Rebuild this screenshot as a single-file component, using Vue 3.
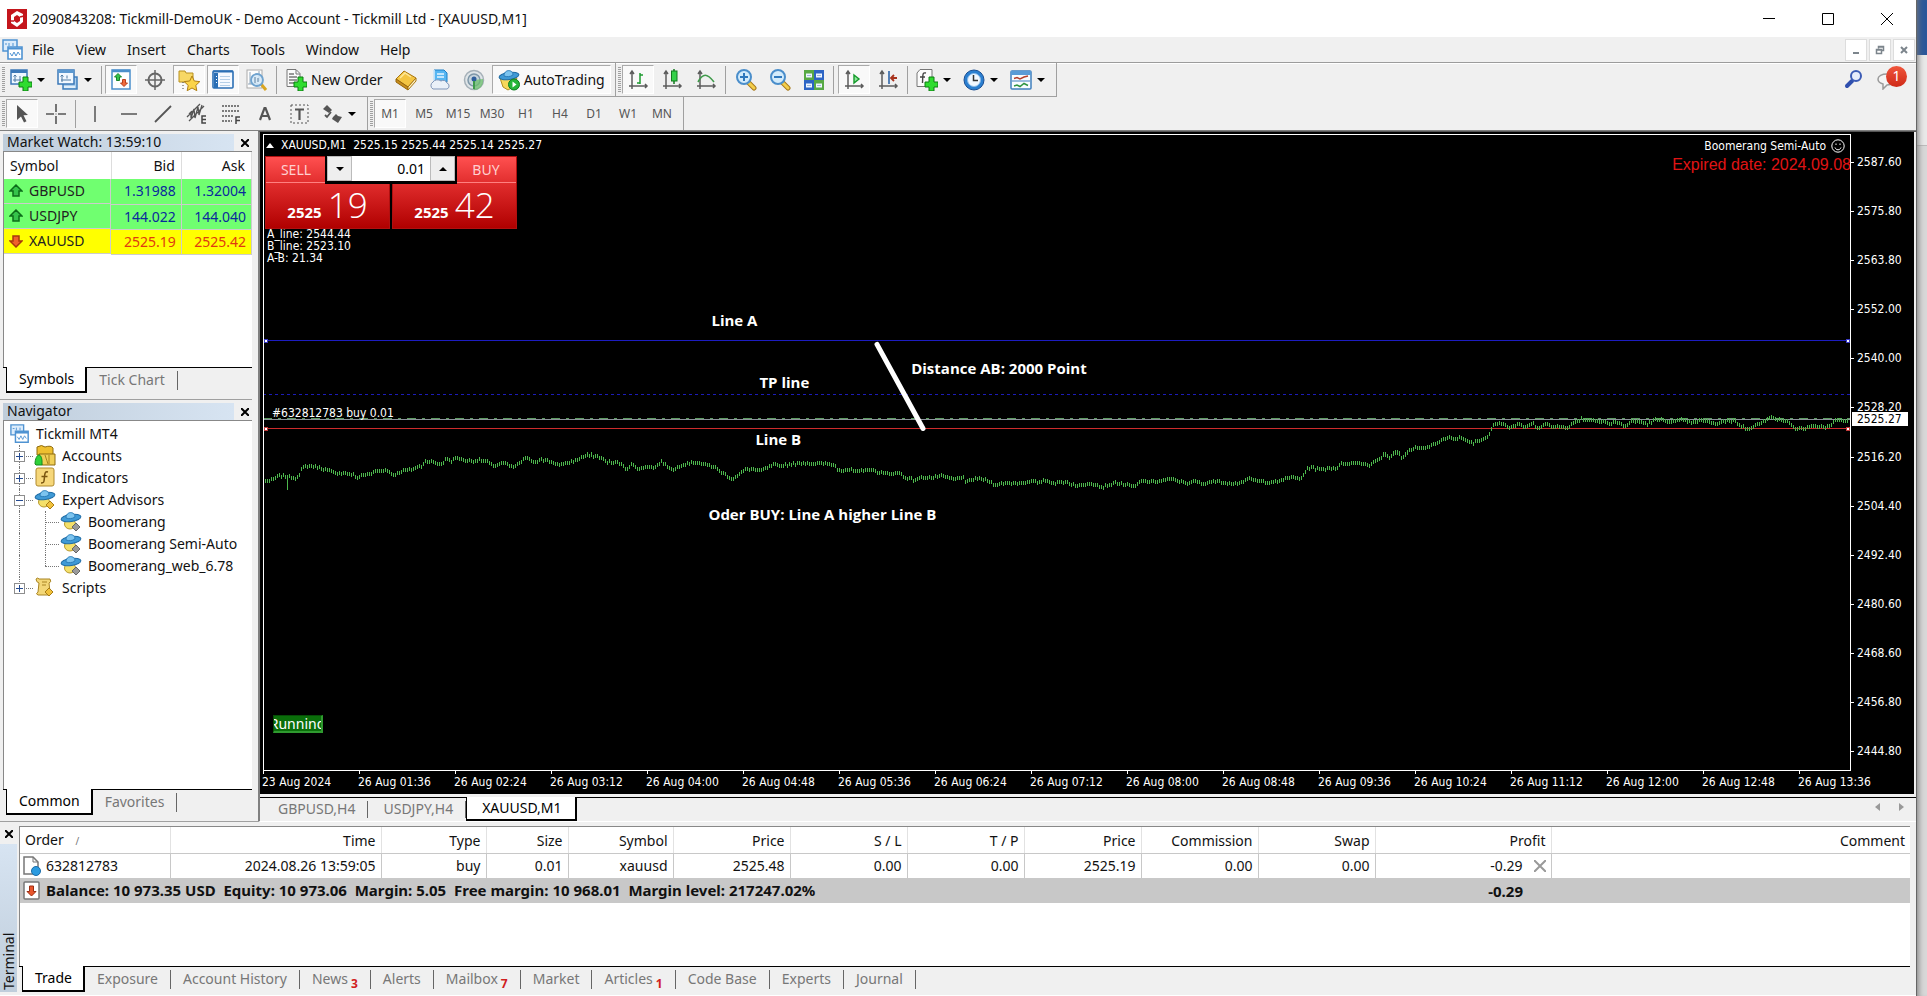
<script setup>
import { ref } from 'vue'

const menus = ['File', 'View', 'Insert', 'Charts', 'Tools', 'Window', 'Help']
const frames = ['M1', 'M5', 'M15', 'M30', 'H1', 'H4', 'D1', 'W1', 'MN']

const axes = '<path d="M5 3V20M2 17H20M3 5L5 2L7 5M18 15L20 17L18 19" fill="none" stroke="#5c5c5c" stroke-width="1.5"/>'
const plus = '<path d="M13 8h5v5h4v5h-4v4h-5v-4H9v-5h4z" fill="#2fdc2f" stroke="#0c7d12"/>'
const lens = '<path d="M14 14l5 5" stroke="#a8791a" stroke-width="5" stroke-linecap="round"/><path d="M14 14l5 5" stroke="#f3ce4b" stroke-width="3" stroke-linecap="round"/><circle cx="9" cy="8" r="7" fill="#d3ebfb" stroke="#4a8ecb" stroke-width="2"/>'
const hat = '<ellipse cx="10" cy="13" rx="5.500" ry="5" fill="#f4e06a" stroke="#b89a2c"/><ellipse cx="11" cy="7" rx="10" ry="3.600" transform="rotate(-8 11 7)" fill="#3f9ad6" stroke="#1f6ca6"/><path d="M6 7C6 0 15 0 15 6C12 8 9 8 6 7z" fill="#7cc4ef" stroke="#2b7db8"/>'

const icons = {
  newChart: '<rect x="1" y="1" width="16" height="14" fill="#eef7ff" stroke="#3b78b8" stroke-width="1.500"/><path d="M1 2.500h16" stroke="#3b78b8" stroke-width="3"/><path d="M5 6v7M3 11h8M10 7v5M3.500 7.500L5 6l1.500 1.500" stroke="#4f7aa3" fill="none"/>' + plus,
  profiles: '<path d="M6 8h14v12H6z" fill="#a9cdec" stroke="#3f7fbd" stroke-width="1.500"/><path d="M1 1h16v14H1z" fill="#f1f8ff" stroke="#3b78b8" stroke-width="1.500"/><path d="M1 2.500h16" stroke="#5b98d0" stroke-width="3"/><path d="M5 6v7M4 11h10M3.500 7.500L5 6l1.500 1.500M10 6.500v3" stroke="#4f7aa3" fill="none"/><path d="M7 18h11" stroke="#f4faff" stroke-width="1.500"/>',
  market: '<rect x="2" y="1" width="18" height="19" fill="#fdfeff" stroke="#4a8ecb" stroke-width="1.500"/><path d="M2 2h18" stroke="#4a8ecb" stroke-width="2.500"/><path d="M8 4.500l3.500 3.500H9.500v3.500h-3V8h-2z" fill="#35c44b" stroke="#17832a"/><path d="M14 17.500L10.500 14h2v-3.500h3V14h2z" fill="#f06a3c" stroke="#b8401c"/>',
  cross: '<circle cx="11" cy="11" r="6.500" fill="none" stroke="#666" stroke-width="2"/><path d="M11 1v20M1 11h20" stroke="#666" stroke-width="1.500"/>',
  favorites: '<path d="M1 2h6l1 2h7v9H1z" fill="#f7d866" stroke="#b8901f"/><path d="M5 13v8" stroke="#444" stroke-dasharray="1 2" fill="none"/><path d="M14 7l2.300 5 5.500.6-4 3.800 1 5.300L14 19l-4.800 2.700 1-5.300-4-3.800 5.500-.6z" fill="#fbd44a" stroke="#b07f14"/>',
  data: '<rect x="1" y="2" width="20" height="17" rx="1" fill="#f4f9ff" stroke="#2b6fb5" stroke-width="1.600"/><path d="M1 2.500h20" stroke="#2b6fb5" stroke-width="2"/><path d="M4 4v15" stroke="#2b6fb5" stroke-width="4"/><path d="M8 7.500h10M8 10.500h10M8 13.500h10M8 16.500h10" stroke="#b4cfe8"/><path d="M4 7.500h1M4 10.500h1M4 13.500h1" stroke="#fff"/>',
  tester: '<rect x="1" y="1" width="15" height="18" fill="#fdfdfd" stroke="#a9a9a9"/><path d="M4 3v12M13 2v10M2 15h10" stroke="#8fa4b8" fill="none"/><path d="M15 15l5 6" stroke="#d9a520" stroke-width="3"/><circle cx="11" cy="11" r="6" fill="#cfe6f8" fill-opacity=".8" stroke="#6fa3cf" stroke-width="1.800"/><path d="M9 8v6M12 9v4" stroke="#5b7f9e"/>',
  order: '<path d="M2 0.500h9l4 4v13H2z" fill="#fafafa" stroke="#777"/><path d="M11 1v4h4" fill="none" stroke="#777"/><path d="M4 5h5M4 8h8M4 11h8M4 14h5" stroke="#777" stroke-width="1.400"/>' + plus,
  editor: '<path d="M1 10L9 2l12 7-8 9z" fill="#f4c542" stroke="#a8750f"/><path d="M1 10l12 8v3L1 13z" fill="#c98e1c" stroke="#96660c"/><path d="M13 18l8-9v3l-8 9z" fill="#fff2c2" stroke="#a8750f"/><path d="M5 9l5-5 6 4" fill="none" stroke="#fde79a" stroke-width="1.500"/>',
  cloud: '<path d="M5 1h10l3 3v9H5z" fill="#56b6f2" stroke="#1c7fc7"/><path d="M5 1v12M8 5h7M8 8h7" stroke="#e6f5ff" stroke-width="1.500"/><path d="M4 20a4 4 0 0 1 0-7 5 4 0 0 1 8-1 4 4 0 0 1 6 2 3.200 3.200 0 0 1 0 6z" fill="#eaf0f8" stroke="#7e94b8"/>',
  signal: '<circle cx="11" cy="11" r="9.500" fill="#dfe5e8" stroke="#a5b0b8" stroke-width="1.500"/><circle cx="11" cy="11" r="6" fill="#c7d4dc" stroke="#7e97a8" stroke-width="1.500"/><path d="M11 11v10c6 0 10-5 9-11z" fill="#6cbf6c" opacity=".75"/><circle cx="11" cy="10" r="2.500" fill="#2f5f9c"/><path d="M11 12v8" stroke="#3f9a4a" stroke-width="2"/>',
  auto: hat.replace(/<ellipse cx="10"[^>]*>/, '<path d="M2 9h17l-4 9-5 3-5-3z" fill="#f6d85a" stroke="#b08f22"/>') + '<circle cx="16" cy="15.500" r="5.500" fill="#27b53a" stroke="#0f7d20"/><path d="M14.500 12.500l4 3-4 3z" fill="#fff"/>',
  bars: axes + '<path d="M13 4v11M13 6h3M10 14h3" stroke="#1c9a2f" stroke-width="1.500" fill="none"/>',
  candles: axes + '<path d="M13 0v15" stroke="#127a1e" stroke-width="1.500"/><rect x="10.500" y="2" width="5.500" height="10" fill="#35d14a" stroke="#127a1e"/>',
  line: axes + '<path d="M3 13C8 4 12 4 19 13" stroke="#3f9a4a" stroke-width="1.600" fill="none"/>',
  zoomIn: lens + '<path d="M9 4v8M5 8h8" stroke="#2f78bd" stroke-width="2"/>',
  zoomOut: lens + '<path d="M5 8h8" stroke="#2f78bd" stroke-width="2"/>',
  tile: '<path d="M1 1h10v10H1z" fill="#57a944"/><path d="M11 1h10v10H11z" fill="#2c64c4"/><path d="M1 11h10v10H1z" fill="#2c64c4"/><path d="M11 11h10v10H11z" fill="#57a944"/><path d="M3 4.500h6v4H3zM13 4.500h6v4h-6zM3 14.500h6v4H3zM13 14.500h6v4h-6z" fill="#eef6ff"/><path d="M4 6.500h4M14 6.500h4M4 16.500h4M14 16.500h4" stroke="#9bb8dc"/>',
  scroll: axes + '<path d="M11 6l5 4-5 4z" fill="#8ee79a" stroke="#149a2a" stroke-width="1.400"/>',
  shift: axes + '<path d="M12 2v13" stroke="#2c64a8" stroke-width="1.600"/><path d="M20 9h-6M17 6l-3 3 3 3" stroke="#a8321c" stroke-width="1.800" fill="none"/>',
  indicator: '<path d="M4 0.500h12v15l-3 2H1V4z" fill="#fbfbfb" stroke="#777"/><path d="M10 4C6 3 7 6 6.500 14M4 8h5" stroke="#444" stroke-width="1.400" fill="none"/>' + plus,
  clock: '<circle cx="11" cy="11" r="10" fill="#2b7fd0" stroke="#1b4f93"/><circle cx="11" cy="11" r="6.500" fill="#f2f8ff" stroke="#8bbbe8"/><path d="M10.500 6v5.500H15" stroke="#333" stroke-width="1.500" fill="none"/>',
  template: '<rect x="1" y="2" width="20" height="18" rx="1" fill="#f8fcff" stroke="#3f7fbd" stroke-width="1.500"/><path d="M1 4h20" stroke="#5a9bd6" stroke-width="4"/><path d="M4 9.500l3-1 3 1.500 4-2 4-1" stroke="#b5402c" stroke-width="1.500" fill="none"/><path d="M2 12h18" stroke="#3f7fbd"/><path d="M4 17l3-1 3 1.500 4-3 4 2" stroke="#2f9440" stroke-width="1.500" fill="none"/>',
  arrow: '<path d="M6 2l0 15 4-3.500 3 6 2.500-1.200-3-6L17 12z" fill="#555"/>',
  crosshair: '<path d="M11 1v8M11 13v8M1 11h8M13 11h8" stroke="#555" stroke-width="1.600"/><path d="M10.500 11h1" stroke="#555"/>',
  vline: '<path d="M11 3v16" stroke="#555" stroke-width="1.500"/>',
  hline: '<path d="M3 11h16" stroke="#555" stroke-width="1.500"/>',
  trend: '<path d="M3 19L19 3" stroke="#555" stroke-width="1.800"/>',
  channel: '<path d="M1 14L14 1M3 18L18 3M3 11l2-2 0 6 3-9 1 9 3-11 1 8 3-10" stroke="#555" stroke-width="1.300" fill="none"/><path d="M20 13h-4v7h4M16 16.500h4" stroke="#444" stroke-width="1.500" fill="none"/>',
  fibo: '<path d="M2 3h18M2 8h18M2 13h12M2 18h10" stroke="#555" stroke-width="1.500" stroke-dasharray="2 1"/><path d="M20 14h-4v7M16 17.500h4" stroke="#444" stroke-width="1.500" fill="none"/>',
  textA: '<path d="M6 17L10.500 5h1L16 17M7.500 13h7" stroke="#555" stroke-width="2.200" fill="none"/>',
  label: '<rect x="3" y="2" width="17" height="18" fill="none" stroke="#555" stroke-dasharray="2 2"/><path d="M7 6.500h9M11.500 6v11" stroke="#555" stroke-width="2.200" fill="none"/>',
  arrows: '<path d="M6 2l5 5-3 3-6-4z" fill="#555"/><path d="M4 12l2 2 4-5" stroke="#555" stroke-width="1.800" fill="none"/><path d="M12 14l3-3 2 2 4 1-4 6-6-4z" fill="#555"/>',
  mt4: '<path d="M1 1h14v11H1z" fill="#dcecfb" stroke="#4f93d2" stroke-width="1.500"/><path d="M3 5h2M7 4v3M11 4v3" stroke="#4f93d2"/><path d="M6 8h14v12H6z" fill="#fff" stroke="#4f93d2" stroke-width="1.600"/><path d="M6 9.500h14" stroke="#4f93d2" stroke-width="2"/><path d="M8 14l2 3 2-4 2 4 2-4 2 3" stroke="#4f93d2" fill="none"/>',
  accounts: '<path d="M3 2q5-3 8 0 6-2 8 1v7H3z" fill="#eebf2f" stroke="#8d6a10"/><path d="M5 9h16v11H8z" fill="#f0cf56" stroke="#8d6a10"/><path d="M15 10v9M11 10q2 6 3 9" stroke="#a8821b" fill="none"/><path d="M1 19c0-5 2-9 4-9s3 4 3 6v4H2z" fill="#2fd03a" stroke="#148a1e"/>',
  indicators: '<rect x="2" y="1" width="18" height="18" rx="2" fill="#f6d77a" stroke="#b08a2c"/><path d="M14 5c-4-1-3 3-4 9-.3 2-1 2-3 2M7.500 9.500h6" stroke="#7a5510" stroke-width="1.500" fill="none"/>',
  expert: hat + '<path d="M16 12l4 4-4 4-4-4z" fill="#f1c23c" stroke="#a87c14"/>',
  expertOff: hat + '<path d="M16 12l4 4-4 4-4-4z" fill="#9a9a9a" stroke="#666"/>',
  scripts: '<path d="M2 2q2-2 3 0h11q2 3-1 4l1 9q1 3-2 3H4q-3-1 0-3L5 6Q2 5 2 2z" fill="#f3d778" stroke="#a88423"/><path d="M8 5h5M8 8h4" stroke="#a88423"/><path d="M15 11l4 4-4 4-4-4z" fill="#f1c23c" stroke="#a87c14"/>',
}

const group1 = [
  { icon: 'market', name: 'Market Watch', on: true },
  { icon: 'cross', name: 'Data Window' },
  { icon: 'favorites', name: 'Navigator', on: true },
  { icon: 'data', name: 'Terminal', on: true },
  { icon: 'tester', name: 'Strategy Tester' },
]
const group2 = [
  { icon: 'editor', name: 'MetaEditor' },
  { icon: 'cloud', name: 'Virtual Hosting' },
  { icon: 'signal', name: 'Signals' },
]
const chartGroups = [
  [
    { icon: 'bars', name: 'Bar Chart', on: true },
    { icon: 'candles', name: 'Candlesticks' },
    { icon: 'line', name: 'Line Chart' },
  ],
  [
    { icon: 'zoomIn', name: 'Zoom In' },
    { icon: 'zoomOut', name: 'Zoom Out' },
    { icon: 'tile', name: 'Tile Windows' },
  ],
  [
    { icon: 'scroll', name: 'Auto Scroll', on: true },
    { icon: 'shift', name: 'Chart Shift' },
  ],
]
const chartMenus = [
  { icon: 'indicator', name: 'Indicators' },
  { icon: 'clock', name: 'Periods' },
  { icon: 'template', name: 'Templates' },
]
const drawTools = [
  { icon: 'vline', name: 'Vertical Line' },
  { icon: 'hline', name: 'Horizontal Line' },
  { icon: 'trend', name: 'Trendline' },
  { icon: 'channel', name: 'Equidistant Channel' },
  { icon: 'fibo', name: 'Fibonacci Retracement' },
  { icon: 'textA', name: 'Text' },
  { icon: 'label', name: 'Text Label' },
]

const quotes = [
  { symbol: 'GBPUSD', bid: '1.31988', ask: '1.32004', up: true },
  { symbol: 'USDJPY', bid: '144.022', ask: '144.040', up: true },
  { symbol: 'XAUUSD', bid: '2525.19', ask: '2525.42', up: false },
]

const tree = [
  { label: 'Accounts', icon: 'accounts', sign: '+' },
  { label: 'Indicators', icon: 'indicators', sign: '+' },
  { label: 'Expert Advisors', icon: 'expert', sign: '-' },
  { label: 'Boomerang', icon: 'expertOff', child: true },
  { label: 'Boomerang Semi-Auto', icon: 'expertOff', child: true },
  { label: 'Boomerang_web_6.78', icon: 'expertOff', child: true, end: true },
  { label: 'Scripts', icon: 'scripts', sign: '+', end: true },
]

const volume = ref('0.01')

/* Plot area in chart units, frame included */
const W = 1588
const H = 636
const at = (x, y) => ({ left: (x / W) * 100 + '%', top: (y / H) * 100 + '%' })
const prices = ['2587.60', '2575.80', '2563.80', '2552.00', '2540.00', '2528.20', '2516.20', '2504.40', '2492.40', '2480.60', '2468.60', '2456.80', '2444.80']
const times = ['23 Aug 2024', '26 Aug 01:36', '26 Aug 02:24', '26 Aug 03:12', '26 Aug 04:00', '26 Aug 04:48', '26 Aug 05:36', '26 Aug 06:24', '26 Aug 07:12', '26 Aug 08:00', '26 Aug 08:48', '26 Aug 09:36', '26 Aug 10:24', '26 Aug 11:12', '26 Aug 12:00', '26 Aug 12:48', '26 Aug 13:36']
const priceTop = (i) => ({ top: ((28 + i * 49) / H) * 100 + '%' })
const timeLeft = (i) => ({ left: ((i * 96) / W) * 100 + '%' })

const notes = [
  { text: 'Line A', x: 448, y: 185 },
  { text: 'Distance AB: 2000 Point', x: 648, y: 233 },
  { text: 'TP line', x: 496, y: 247 },
  { text: 'Line B', x: 492, y: 304 },
  { text: 'Oder BUY: Line A higher Line B', x: 445, y: 380 },
]

const path = [
  0, 346, 5, 346, 10, 344, 15, 341, 23, 341, 28, 342, 32, 343, 36, 340, 39, 333, 43, 331, 51, 331, 56, 333, 63, 335, 72, 338, 81, 338,
  90, 340, 93, 343, 99, 340, 108, 339, 113, 336, 122, 335, 131, 340, 138, 336, 147, 335, 154, 332, 158, 331, 162, 326, 168, 327,
  177, 329, 181, 327, 183, 323, 188, 326, 193, 323, 201, 325, 208, 326, 217, 325, 224, 327, 229, 331, 240, 328, 249, 332, 254, 330,
  261, 324, 265, 323, 270, 327, 277, 325, 284, 325, 293, 330, 304, 328, 313, 325, 318, 322, 326, 321, 336, 322, 343, 327, 354, 328,
  359, 330, 363, 334, 368, 330, 376, 334, 384, 331, 390, 333, 398, 327, 404, 331, 410, 335, 417, 330, 426, 328, 434, 327, 442, 330,
  449, 331, 458, 337, 468, 344, 474, 341, 483, 334, 488, 334, 497, 336, 506, 332, 511, 329, 515, 332, 520, 330, 533, 329, 540, 328,
  557, 329, 564, 329, 571, 330, 575, 335, 586, 335, 596, 337, 605, 334, 612, 336, 623, 339, 630, 338, 636, 338, 641, 342, 651, 345,
  659, 342, 668, 343, 677, 341, 691, 344, 700, 342, 702, 348, 712, 343, 723, 345, 728, 348, 734, 350, 743, 348, 757, 348, 770, 347,
  776, 348, 780, 345, 791, 348, 803, 347, 814, 351, 828, 348, 839, 352, 852, 348, 864, 350, 871, 352, 878, 346, 889, 347, 909, 344,
  918, 347, 925, 348, 932, 346, 940, 350, 946, 346, 957, 347, 964, 348, 975, 348, 986, 344, 993, 346, 1007, 347, 1016, 347,
  1025, 342, 1037, 344, 1043, 335, 1048, 332, 1053, 334, 1061, 334, 1068, 333, 1073, 333, 1078, 329, 1089, 328, 1096, 328, 1107, 330,
  1112, 325, 1117, 324, 1120, 319, 1124, 321, 1126, 323, 1133, 317, 1138, 322, 1142, 321, 1145, 317, 1152, 313, 1159, 315, 1170, 311,
  1175, 309, 1179, 305, 1186, 302, 1191, 306, 1196, 304, 1202, 306, 1209, 309, 1218, 306, 1225, 302, 1229, 292, 1233, 289,
  1240, 290, 1247, 294, 1254, 290, 1261, 293, 1270, 290, 1275, 294, 1281, 290, 1290, 293, 1299, 292, 1304, 295, 1311, 288,
  1318, 285, 1329, 286, 1340, 287, 1347, 290, 1352, 288, 1362, 292, 1370, 287, 1377, 288, 1384, 290, 1391, 286, 1400, 286,
  1411, 288, 1418, 286, 1431, 289, 1438, 286, 1445, 288, 1452, 290, 1461, 287, 1472, 287, 1477, 292, 1484, 295, 1493, 291,
  1502, 287, 1508, 282, 1515, 286, 1524, 287, 1529, 293, 1534, 295, 1542, 294, 1554, 292, 1567, 293, 1571, 287, 1586, 286,
]
function buildBars() {
  let d = ''
  let k = 0
  let seed = 7
  for (let x = 2; x < W - 2; x += 2) {
    while (k + 3 < path.length && path[k + 2] < x) k += 2
    const x0 = path[k], y0 = path[k + 1], x1 = path[k + 2] ?? x0 + 1, y1 = path[k + 3] ?? y0
    const y = y0 + ((y1 - y0) * (x - x0)) / (x1 - x0)
    seed = (seed * 1103515245 + 12345) % 2147483648
    const r = seed / 2147483648
    const top = Math.round(y - 1 - r * 2)
    const bottom = Math.round(y + 1 + (1 - r) * 2)
    d += `M${x + 0.5} ${top}V${x === 24 ? 355 : bottom}`
  }
  return d
}
const bars = buildBars()

const heads = ['Time', 'Type', 'Size', 'Symbol', 'Price', 'S / L', 'T / P', 'Price', 'Commission', 'Swap', 'Profit', 'Comment']
const cells = ['2024.08.26 13:59:05', 'buy', '0.01', 'xauusd', '2525.48', '0.00', '0.00', '2525.19', '0.00', '0.00']
const terminalTabs = [
  { t: 'Trade', on: true }, { t: 'Exposure' }, { t: 'Account History' }, { t: 'News', n: 3 }, { t: 'Alerts' },
  { t: 'Mailbox', n: 7 }, { t: 'Market' }, { t: 'Articles', n: 1 }, { t: 'Code Base' }, { t: 'Experts' }, { t: 'Journal' },
]
</script>

<template>
  <div class="desktop">
    <div class="window">
      <header class="titlebar">
        <svg class="logo" viewBox="0 0 20 20"><rect width="20" height="20" fill="#c4161c" /><path d="M10 2l6 3v8l-6 5-6-4V6z" fill="#fff" /><path d="M10 6l3 2v4l-3 2-3-2V8z" fill="#c4161c" /><path d="M3 12l4 0M13 8l4-1" stroke="#c4161c" stroke-width="1.500" /></svg>
        <h1>2090843208: Tickmill-DemoUK - Demo Account - Tickmill Ltd - [XAUUSD,M1]</h1>
        <div class="controls">
          <button aria-label="Minimize"><svg viewBox="0 0 12 12"><path d="M0 5.500h12" /></svg></button>
          <button aria-label="Maximize"><svg viewBox="0 0 12 12"><path d="M.5.5h11v11H.5z" /></svg></button>
          <button aria-label="Close"><svg viewBox="0 0 12 12"><path d="M0 0l12 12M12 0L0 12" /></svg></button>
        </div>
      </header>

      <nav class="menubar">
        <svg class="ic menu-icon" viewBox="0 0 22 22" v-html="icons.mt4"></svg>
        <button v-for="m in menus" :key="m">{{ m }}</button>
        <div class="mdi">
          <button aria-label="Minimize chart"><svg viewBox="0 0 10 10"><path d="M2 8h6" stroke-width="2" /></svg></button>
          <button aria-label="Restore chart"><svg viewBox="0 0 10 10"><path d="M3.500 3.500v-2h5v4h-2M1.500 4.500h5v4h-5zM1.500 5h5M3.500 2h5" stroke-width="1.500" /></svg></button>
          <button aria-label="Close chart"><svg viewBox="0 0 10 10"><path d="M2 2l6 6M8 2L2 8" stroke-width="2" /></svg></button>
        </div>
      </nav>

      <div class="toolbars">
        <div class="toolbar">
          <div class="band boxed">
            <i class="grip"></i>
            <button class="drop" aria-label="New Chart"><svg class="ic" viewBox="0 0 22 22" v-html="icons.newChart"></svg><i class="caret"></i></button>
            <button class="drop" aria-label="Profiles"><svg class="ic" viewBox="0 0 22 22" v-html="icons.profiles"></svg><i class="caret"></i></button>
            <i class="sep"></i>
            <button v-for="b in group1" :key="b.name" class="tool" :class="{ on: b.on }" :aria-label="b.name"><svg class="ic" viewBox="0 0 22 22" v-html="icons[b.icon]"></svg></button>
            <i class="sep"></i>
            <button class="wide"><svg class="ic" viewBox="0 0 22 22" v-html="icons.order"></svg>New Order</button>
            <button v-for="b in group2" :key="b.name" class="tool" :aria-label="b.name"><svg class="ic" viewBox="0 0 22 22" v-html="icons[b.icon]"></svg></button>
            <button class="wide auto on"><svg class="ic" viewBox="0 0 22 22" v-html="icons.auto"></svg>AutoTrading</button>
          </div>
          <div class="band boxed">
            <i class="grip"></i>
            <template v-for="(g, i) in chartGroups" :key="i">
              <button v-for="b in g" :key="b.name" class="tool" :class="{ on: b.on }" :aria-label="b.name"><svg class="ic" viewBox="0 0 22 22" v-html="icons[b.icon]"></svg></button>
              <i class="sep"></i>
            </template>
            <button v-for="b in chartMenus" :key="b.name" class="drop" :aria-label="b.name"><svg class="ic" viewBox="0 0 22 22" v-html="icons[b.icon]"></svg><i class="caret"></i></button>
          </div>
          <div class="right-tools">
            <button aria-label="Search"><svg class="ic" viewBox="0 0 22 22"><path d="M4 18l5-5" stroke="#2f4fae" stroke-width="4" stroke-linecap="round" /><circle cx="13" cy="8" r="5" fill="#e6ecfb" stroke="#3b5bb5" stroke-width="2" /></svg></button>
            <button class="chat" aria-label="Messages"><svg class="ic" viewBox="0 0 22 22"><path d="M11 6c5 0 8 2 8 5s-3 6-8 6l-4 4v-5c-4-1-5-3-5-5 0-3 4-5 9-5z" fill="#f4f4f4" stroke="#9a9a9a" stroke-width="1.500" /></svg><span class="badge">1</span></button>
          </div>
        </div>
        <div class="toolbar">
          <div class="band">
            <i class="grip"></i>
            <button class="tool on" aria-label="Cursor"><svg class="ic" viewBox="0 0 22 22" v-html="icons.arrow"></svg></button>
            <button class="tool" aria-label="Crosshair"><svg class="ic" viewBox="0 0 22 22" v-html="icons.crosshair"></svg></button>
            <i class="sep"></i>
            <button v-for="b in drawTools" :key="b.name" class="tool" :aria-label="b.name"><svg class="ic" viewBox="0 0 22 22" v-html="icons[b.icon]"></svg></button>
            <button class="drop" aria-label="Arrows"><svg class="ic" viewBox="0 0 22 22" v-html="icons.arrows"></svg><i class="caret"></i></button>
          </div>
          <div class="band">
            <i class="grip"></i>
            <button v-for="(f, i) in frames" :key="f" class="tool frame" :class="{ on: i === 0 }">{{ f }}</button>
          </div>
        </div>
      </div>

      <main class="workspace">
        <aside class="sidebar">
          <section class="panel market">
            <div class="panel-head"><h2>Market Watch: 13:59:10</h2><button aria-label="Close Market Watch"><svg viewBox="0 0 8 8"><path d="M0 0l8 8M8 0L0 8" /></svg></button></div>
            <div class="panel-body">
              <table class="quotes">
                <thead><tr><th>Symbol</th><th>Bid</th><th>Ask</th></tr></thead>
                <tbody>
                  <tr v-for="q in quotes" :key="q.symbol" :class="q.up ? 'up' : 'down'">
                    <td><svg viewBox="0 0 14 14"><path v-if="q.up" d="M7 1l6 6h-3v5H4V7H1z" /><path v-else d="M7 13L1 7h3V2h6v5h3z" /></svg>{{ q.symbol }}</td>
                    <td>{{ q.bid }}</td><td>{{ q.ask }}</td>
                  </tr>
                </tbody>
              </table>
            </div>
            <div class="tabs"><button class="on">Symbols</button><button>Tick Chart</button></div>
          </section>
          <section class="panel navigator">
            <div class="panel-head"><h2>Navigator</h2><button aria-label="Close Navigator"><svg viewBox="0 0 8 8"><path d="M0 0l8 8M8 0L0 8" /></svg></button></div>
            <div class="panel-body">
              <ul class="tree">
                <li class="root"><svg class="ic" viewBox="0 0 22 22" v-html="icons.mt4"></svg>Tickmill MT4</li>
                <li v-for="n in tree" :key="n.label" :class="{ child: n.child, end: n.end }">
                  <span class="trunk"><svg v-if="n.sign" class="box" viewBox="0 0 11 11"><rect x=".5" y=".5" width="10" height="10" fill="#fff" stroke="#8e8e8e" /><path :d="n.sign === '+' ? 'M2 5.500h7M5.500 2v7' : 'M2 5.500h7'" stroke="#244a90" /></svg></span>
                  <span v-if="n.child" class="branch"></span>
                  <svg class="ic" viewBox="0 0 22 22" v-html="icons[n.icon]"></svg>{{ n.label }}
                </li>
              </ul>
            </div>
            <div class="tabs"><button class="on">Common</button><button>Favorites</button></div>
          </section>
        </aside>

        <section class="charts">
          <div class="chart">
            <div class="plot">
              <svg class="canvas" viewBox="1 1 1586 634" preserveAspectRatio="none">
                <path d="M0 206.500H1588" stroke="#1c1cc0" />
                <path d="M0 260.500H1588" stroke="#1c1cb8" stroke-dasharray="3 3" />
                <path d="M0 284.500H1588" stroke="#5f9c63" stroke-dasharray="9 6 3 6" />
                <path d="M0 285.500H1588" stroke="#8b949b" />
                <path d="M0 294.500H1588" stroke="#cc2c2c" />
                <path :d="bars" stroke="#4db84d" />
                <path d="M614 210L660 294" stroke="#fff" stroke-width="5" stroke-linecap="round" class="smooth" />
                <g fill="#fff"><rect x="1" y="205" width="3" height="3" stroke="#3a3ac0" /><rect x="1583" y="205" width="3" height="3" stroke="#3a3ac0" /><rect x="1" y="293" width="3" height="3" stroke="#c03a3a" /><rect x="1583" y="293" width="3" height="3" stroke="#c03a3a" /></g>
              </svg>
              <p class="ohlc"><i class="tri"></i>XAUUSD,M1&nbsp; 2525.15 2525.44 2525.14 2525.27</p>
              <p class="info">A_line: 2544.44<br />B_line: 2523.10<br />A-B: 21.34</p>
              <div class="trade-panel">
                <button class="side sell"><span class="cap">SELL</span><span class="quote"><b>2525</b><em>19</em></span></button>
                <button class="side buy"><span class="cap">BUY</span><span class="quote"><b>2525</b><em>42</em></span></button>
                <div class="volume">
                  <button aria-label="Decrease volume"><i class="caret"></i></button>
                  <input v-model="volume" aria-label="Volume" />
                  <button aria-label="Increase volume"><i class="caret flip"></i></button>
                </div>
              </div>
              <p class="ea">Boomerang Semi-Auto <svg viewBox="0 0 14 14"><circle cx="7" cy="7" r="6.200" /><path d="M4 8.500c1 3 5 3 6 0M5 4.500v1.500M9 4.500v1.500" /></svg></p>
              <p class="expired">Expired date: 2024.09.08</p>
              <p class="order-label" :style="at(8, 278)">#632812783 buy 0.01</p>
              <p v-for="n in notes" :key="n.text" class="note" :style="at(n.x, n.y)">{{ n.text }}</p>
              <button class="running"><span>Running</span></button>
            </div>
            <div class="prices">
              <span v-for="(p, i) in prices" :key="p" class="price" :style="priceTop(i)">{{ p }}</span>
              <span class="now" :style="at(0, 285)">2525.27</span>
            </div>
            <div class="times"><span v-for="(t, i) in times" :key="t" :style="timeLeft(i)">{{ t }}</span></div>
          </div>
          <div class="tabs chart-tabs">
            <button>GBPUSD,H4</button><button>USDJPY,H4</button><button class="on">XAUUSD,M1</button>
            <div class="scrollers"><button aria-label="Scroll tabs left"><i class="left"></i></button><button aria-label="Scroll tabs right"><i class="right"></i></button></div>
          </div>
        </section>
      </main>

      <section class="terminal">
        <div class="rail">
          <button aria-label="Close Terminal"><svg viewBox="0 0 8 8"><path d="M0 0l8 8M8 0L0 8" /></svg></button>
          <h2>Terminal</h2>
        </div>
        <div class="terminal-main">
          <div class="orders-wrap">
            <table class="orders">
              <colgroup><col class="c-order" /><col class="c-time" /><col class="c-type" /><col class="c-size" /><col class="c-type" /><col v-for="n in 6" :key="n" class="c-num" /><col class="c-profit" /><col /></colgroup>
              <thead><tr><th>Order <i class="sort">/</i></th><th v-for="(h, i) in heads" :key="i">{{ h }}</th></tr></thead>
              <tbody>
                <tr>
                  <td><svg class="doc" viewBox="0 0 18 20"><path d="M1 1h9l5 5v12H1z" fill="#fff" stroke="#777" stroke-width="1.500" /><path d="M10 1v5h5" fill="none" stroke="#777" /><circle cx="13" cy="15" r="4.500" fill="#2b9be0" stroke="#1a6ca8" /></svg>632812783</td>
                  <td v-for="(c, i) in cells" :key="i">{{ c }}</td>
                  <td class="profit">-0.29 <button aria-label="Close order"><svg viewBox="0 0 12 12"><path d="M0 0l12 12M12 0L0 12" /></svg></button></td>
                  <td></td>
                </tr>
                <tr class="balance">
                  <td colspan="11"><svg class="doc" viewBox="0 0 18 20"><rect x="1" y="1" width="15" height="17" rx="1" fill="#fff" stroke="#777" stroke-width="1.500" /><path d="M8.500 15L4 10.500h2.500V5h4v5.500H13z" fill="#e8562c" stroke="#9c2c10" /></svg>Balance: 10 973.35 USD&nbsp; Equity: 10 973.06&nbsp; Margin: 5.05&nbsp; Free margin: 10 968.01&nbsp; Margin level: 217247.02%</td>
                  <td class="profit">-0.29</td>
                  <td></td>
                </tr>
              </tbody>
            </table>
          </div>
          <div class="tabs">
            <button v-for="t in terminalTabs" :key="t.t" :class="{ on: t.on }">{{ t.t }}<sub v-if="t.n">{{ t.n }}</sub></button>
          </div>
        </div>
      </section>
    </div>
    <div class="backdrop"></div>
  </div>
</template>

<style>
body { margin: 0; background: #d4d4d4; }
</style>

<style scoped>
* { box-sizing: border-box; }
.desktop { display: flex; height: 100vh; font: 14px/20px "Noto Sans", "Open Sans", sans-serif; color: #111; overflow: hidden; }
button { font: inherit; color: inherit; background: none; border: 0; padding: 0; margin: 0; display: flex; align-items: center; justify-content: center; }
h1, h2, p, ul { margin: 0; padding: 0; font-weight: 400; font-size: inherit; }
i { font-style: normal; }
svg { display: block; flex: none; }
.ic { width: 22px; height: 22px; }
.window { flex: 1; min-width: 0; display: flex; flex-direction: column; background: #f0f0f0; border-right: 1px solid #666; }
.backdrop { width: 10px; background: linear-gradient(#2b579a 0 55px, #e9e9e9 55px 145px, #bbb 145px 146px, #d8d8d8 146px); box-shadow: inset 6px 0 6px -5px #777; }

.titlebar { height: 37px; display: flex; align-items: center; background: #fff; padding-left: 7px; }
.logo { width: 20px; height: 20px; margin-right: 5px; }
.controls { margin-left: auto; display: flex; align-self: stretch; }
.controls button { width: 59px; }
.controls svg { width: 12px; height: 12px; fill: none; stroke: #000; }

.menubar { height: 25px; display: flex; align-items: center; padding-right: 1px; }
.menubar > button { padding: 0 11px 0 10px; }
.menu-icon { margin-left: 2px; margin-right: -2px; }
.mdi { margin-left: auto; display: flex; gap: 2px; }
.mdi button { width: 22px; height: 22px; background: #fff; border: 1px solid #ddd; }
.mdi svg { width: 10px; height: 10px; fill: none; stroke: #7c858c; }

.toolbars { border-top: 1px solid #9c9c9c; border-bottom: 1px solid #808080; box-shadow: inset 0 1px #fff; }
.toolbar { display: flex; height: 33px; }
.toolbar:first-child { height: 34px; }
.band { display: flex; align-items: center; border-right: 1px solid #a0a0a0; padding-right: 4px; }
.boxed { border-bottom: 1px solid #a0a0a0; }
.grip { width: 3px; height: 26px; margin-left: 2px; background: repeating-linear-gradient(#a0a0a0 0 1px, #f0f0f0 1px 2px); }
.tool { width: 32px; height: 29px; margin: 0 1px; }
.on { background: #f9f9f9; border: 1px solid #fff; border-top-color: #aaa; border-left-color: #aaa; }
.drop { width: 47px; height: 29px; gap: 5px; padding-right: 2px; }
.caret { width: 0; height: 0; border: 4px solid transparent; border-top-color: #000; border-bottom: 0; }
.flip { transform: rotate(180deg); }
.sep { width: 1px; height: 28px; margin: 0 2px; background: #a0a0a0; }
.band + .boxed .sep { margin: 0 3px 0 2px; }
.wide { height: 29px; padding: 0 6px; gap: 4px; }
.auto { padding: 0 5px; margin-left: 1px; }
.frame { font-size: 12px; color: #555; }
.right-tools { margin-left: auto; display: flex; align-items: flex-start; gap: 11px; padding: 5px 6px 0 0; }
.chat { position: relative; width: 34px; justify-content: flex-start; }
.badge { position: absolute; right: 3px; top: -2px; width: 21px; height: 21px; border-radius: 50%; background: linear-gradient(#f0563c, #cf2a18); color: #fff; font-size: 14px; }

.workspace { flex: 1; min-height: 0; display: flex; }
.sidebar { width: 258px; flex: none; display: flex; flex-direction: column; padding-right: 6px; border-bottom: 1px solid #a0a0a0; }
.panel { display: flex; flex-direction: column; padding: 3px 0 6px 3px; }
.market { flex: none; height: 269px; border-bottom: 1px solid #a0a0a0; }
.navigator { flex: 1; min-height: 0; }
.panel-head { display: flex; height: 17px; line-height: 16px; }
.panel-head h2 { width: 231px; padding-left: 4px; background: linear-gradient(90deg, #bfcddb, #d7e4f2); }
.panel-head button { flex: 1; padding-left: 4px; }
.panel-head svg, .rail svg { width: 8px; height: 8px; fill: none; stroke: #000; stroke-width: 2; }
.panel-body { flex: 1; min-height: 0; background: #fff; border-top: 1px solid #888; border-left: 1px solid #888; overflow: hidden; }
.quotes { width: 100%; border-collapse: collapse; table-layout: fixed; }
.quotes th { font-weight: 400; height: 27px; padding: 0 6px; text-align: right; border-right: 1px solid #ddd; }
.quotes th:first-child { width: 107px; text-align: left; }
.quotes td { height: 25px; padding: 0 5px; text-align: right; border-right: 1px solid #ccc; border-bottom: 1px solid #ccc; }
.quotes td:first-child { display: flex; align-items: center; gap: 6px; color: #222; }
.quotes svg { width: 14px; height: 14px; stroke-width: 1.500px; }
.up { background: #70ff70; color: #0a2a9c; }
.up svg { fill: #35c44b; stroke: #0c6d1a; }
.down { background: #ff0; color: #e03a10; }
.down svg { fill: #f0602c; stroke: #a8380c; }

.tabs { display: flex; height: 26px; border-top: 1px solid #000; padding-left: 3px; flex: none; }
.tabs > button { position: relative; padding: 0 13px 0 12px; color: #777; height: 24px; }
.tabs > button:not(.on)::after { content: ""; position: absolute; right: 0; top: 3px; bottom: 2px; width: 1px; background: #666; }
.tabs > .on { background: #fff; color: #000; border: 1px solid #000; border-top: 0; border-right-width: 2px; border-bottom-width: 2px; margin-top: -1px; height: 26px; padding: 0 11px 0 12px; }
.tabs sub { color: #d02020; font-size: 12px; font-weight: 700; line-height: 12px; margin: 10px 0 0 3px; vertical-align: 0; }

.tree { list-style: none; padding-top: 2px; }
.tree li { display: flex; align-items: center; height: 22px; }
.tree .ic { margin-right: 6px; }
.root { padding-left: 6px; }
.root .ic { width: 20px; height: 20px; }
.trunk { position: relative; width: 30px; align-self: stretch; flex: none; }
.trunk::before { content: ""; position: absolute; left: 15px; top: 0; bottom: 0; border-left: 1px dotted #777; }
.end:not(.child) .trunk::before { bottom: 50%; }
.tree li:not(.child) .trunk::after { content: ""; position: absolute; left: 15px; right: 1px; top: 50%; border-top: 1px dotted #777; }
.box { position: absolute; z-index: 1; left: 10px; top: 6px; width: 11px; height: 11px; }
.branch { position: relative; width: 26px; align-self: stretch; flex: none; }
.branch::before { content: ""; position: absolute; left: 11px; top: 0; bottom: 0; border-left: 1px dotted #777; }
.end .branch::before { bottom: 50%; }
.branch::after { content: ""; position: absolute; left: 11px; right: 1px; top: 50%; border-top: 1px dotted #777; }

.charts { flex: 1; min-width: 0; display: flex; flex-direction: column; padding-right: 2px; border-left: 2px solid #808080; border-top: 1px solid #555; border-bottom: 1px solid #fff; }
.chart { flex: 1; min-height: 0; background: #000; color: #fff; font: 12px/14px "DejaVu Sans Condensed", "Noto Sans", sans-serif; display: grid; grid-template: 1fr 23px / 1fr 63px; padding: 2px 0 0 3px; margin-bottom: 3px; }
.plot { position: relative; border: 1px solid #fff; overflow: hidden; }
.canvas { position: absolute; inset: 0; width: 100%; height: 100%; fill: none; shape-rendering: crispEdges; }
.smooth { shape-rendering: auto; }
.plot p { position: absolute; white-space: nowrap; }
.ohlc { left: 2px; top: 3px; display: flex; align-items: center; }
.tri { border: 4px solid transparent; border-top: 0; border-bottom: 5px solid #fff; margin-right: 7px; }
.plot .info { left: 3px; top: 93px; line-height: 12px; }
.trade-panel { position: absolute; left: 1px; top: 21px; display: flex; gap: 2px; background: #000; }
.side { width: 125px; height: 73px; flex-direction: column; align-items: stretch; justify-content: flex-start; background: linear-gradient(#ff5050, #e02c2c 38%, #b00000); border: 1px solid #b01010; }
.cap { height: 26px; width: 60px; font: 14px/26px "Noto Sans", sans-serif; color: #ffd0d0; border-bottom: 1px solid #ff8080; }
.buy .cap { align-self: flex-end; }
.quote { flex: 1; display: flex; align-items: baseline; justify-content: center; gap: 6px; font: 15px/44px "Noto Sans", "Open Sans", sans-serif; }
.quote em { font: 300 35px/44px "Open Sans", sans-serif; }
.volume { position: absolute; left: 60px; top: 0; width: 132px; height: 28px; background: #000; padding: 0 2px 3px; display: flex; }
.volume button { width: 25px; background: #eee; border: 1px solid #bbb; }
.volume input { flex: 1; min-width: 0; border: 0; text-align: right; padding: 0 5px; font: 14px/20px "Noto Sans", sans-serif; color: #000; }
.ea { right: 5px; top: 4px; display: flex; align-items: center; gap: 5px; }
.ea svg { width: 14px; height: 14px; fill: none; stroke: #fff; }
.plot .expired { right: -1px; top: 20px; font: 16px/20px "Liberation Sans", Arial, sans-serif; color: #e01414; }
.order-label, .note { transform: translateY(-50%); }
.note { font: 700 15px/18px "Open Sans", "Noto Sans", sans-serif; }
.running { position: absolute; left: 9px; bottom: 37px; width: 50px; height: 18px; overflow: hidden; background: #0a6e0a; border: 1px solid #064d06; border-right: 2px solid #2f9a2f; border-bottom: 2px solid #2f9a2f; font: 14px/16px "Noto Sans", sans-serif; }
.prices { position: relative; }
.price { position: absolute; left: 0; transform: translateY(-50%); padding-left: 6px; }
.price::before { content: ""; position: absolute; left: 0; top: 7px; width: 3px; height: 1px; background: #fff; }
.now { position: absolute; margin-left: 1px; transform: translateY(-50%); width: 56px; padding-left: 5px; background: #fff; color: #000; }
.times { position: relative; margin-left: -1px; margin-right: 1px; }
.times span { position: absolute; top: 4px; white-space: nowrap; }
.times span::before { content: ""; position: absolute; left: 1px; top: -4px; width: 1px; height: 3px; background: #fff; }
.chart-tabs { height: 24px; margin-right: -2px; }
.chart-tabs > button { height: 22px; padding: 0 13px 0 15px; }
.chart-tabs > button.on { height: 24px; padding: 0 13px 0 15px; }
.scrollers { margin-left: auto; display: flex; gap: 19px; padding: 0 12px 5px 0; }
.scrollers i { border: 4px solid transparent; }
.scrollers .left { border-right: 5px solid #999; border-left: 0; }
.scrollers .right { border-left: 5px solid #999; border-right: 0; }

.terminal { flex: none; height: 174px; display: flex; padding: 4px 6px 3px 0; border-bottom: 1px solid #fff; }
.rail { width: 19px; display: flex; flex-direction: column; flex: none; padding-right: 2px; }
.rail button { height: 15px; margin-bottom: 3px; }
.rail h2 { flex: 1; writing-mode: vertical-rl; transform: rotate(180deg); line-height: 17px; padding-top: 2px; background: linear-gradient(#bfcddb, #d7e4f2); }
.terminal-main { flex: 1; min-width: 0; display: flex; flex-direction: column; }
.orders-wrap { flex: 1; min-height: 0; background: #fff; border-top: 1px solid #888; border-left: 1px solid #888; }
.orders { width: 100%; table-layout: fixed; border-collapse: collapse; }
.orders th, .orders td { font-weight: 400; text-align: right; padding: 0 5px; border-right: 1px solid #c8c8c8; white-space: nowrap; height: 25px; }
.orders th { height: 26px; padding: 2px 5px 0; border-right-color: #e2e2e2; border-bottom: 1px solid #c8c8c8; }
.orders th:first-child, .orders td:first-child { text-align: left; }
.orders th:last-child, .orders td:last-child { border-right: 0; }
.sort { font-size: 10px; color: #777; margin-left: 8px; }
.doc { width: 18px; height: 20px; display: inline-block; vertical-align: middle; margin: -2px 5px 0 -2px; }
.c-order { width: 150px; }
.c-time { width: 211px; }
.c-type { width: 105px; }
.c-size { width: 82px; }
.c-num { width: 117px; }
.c-profit { width: 176px; }
.orders .profit { padding-right: 28px; position: relative; }
.profit button { position: absolute; right: 5px; top: 6px; }
.profit svg { width: 12px; height: 12px; stroke: #999; stroke-width: 2; }
.balance { background: #c8c8c8; }
.orders .balance td { font-size: 15px; font-weight: 700; border: 0; }
</style>
